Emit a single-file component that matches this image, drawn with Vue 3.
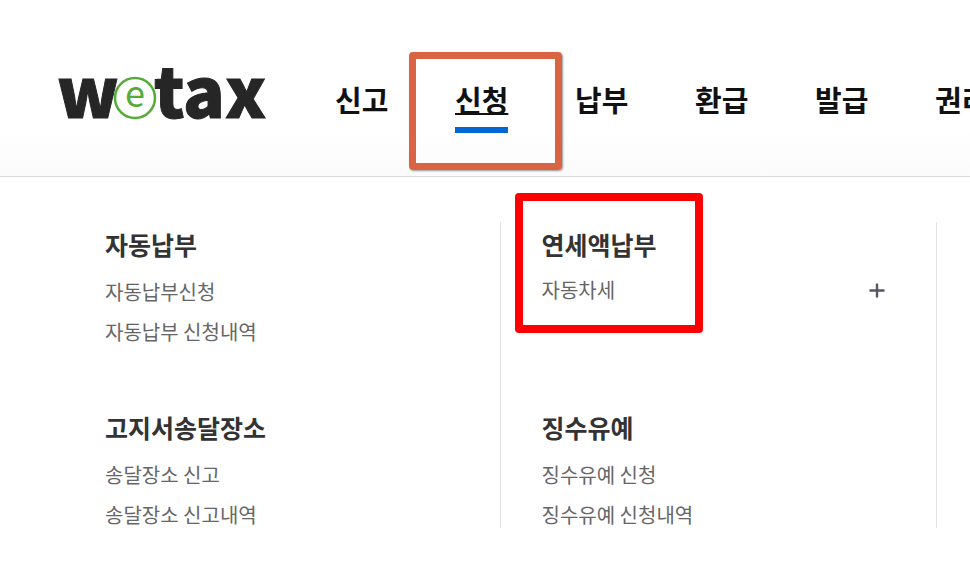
<template>
  <div class="page">
    <header class="header">
      <a href="#" class="logo" aria-label="wetax">
        <svg width="210" height="60" viewBox="0 0 210 60">
          <text class="logo-bold" x="0" y="53">w</text>
          <circle cx="78" cy="33" r="20" fill="#fff" stroke="#55ab3a" stroke-width="2.5" />
          <text class="logo-e" x="78" y="42" text-anchor="middle">e</text>
          <text class="logo-bold" x="97" y="53">tax</text>
        </svg>
      </a>
      <nav class="nav">
        <div v-for="item in navItems" :key="item" class="nav-item">
          <a href="#" class="nav-link" :class="{ active: item === current }">{{ item }}</a>
          <span v-if="item === current" class="mark mark-nav"></span>
        </div>
      </nav>
    </header>

    <main class="menu">
      <div v-for="(column, index) in columns" :key="index" class="column">
        <section v-for="group in column" :key="group.title" class="group">
          <h2>{{ group.title }}</h2>
          <div v-if="group.expandable" class="expand-row">
            <a href="#">{{ group.links[0] }}</a>
            <button type="button" class="expand" aria-label="+">
              <svg width="16" height="16" viewBox="0 0 16 16">
                <path d="M9 1.5v14M1.5 8.5h15" stroke="#585666" stroke-width="2.4" />
              </svg>
            </button>
          </div>
          <ul v-else>
            <li v-for="link in group.links" :key="link">
              <a href="#">{{ link }}</a>
            </li>
          </ul>
          <span v-if="group.expandable" class="mark mark-group"></span>
        </section>
      </div>
    </main>
  </div>
</template>

<script setup>
import { ref } from 'vue'

const current = ref('신청')
const navItems = ['신고', '신청', '납부', '환급', '발급', '권리']

const columns = [
  [
    { title: '자동납부', links: ['자동납부신청', '자동납부 신청내역'] },
    { title: '고지서송달장소', links: ['송달장소 신고', '송달장소 신고내역'] }
  ],
  [
    { title: '연세액납부', links: ['자동차세'], expandable: true },
    { title: '징수유예', links: ['징수유예 신청', '징수유예 신청내역'] }
  ]
]
</script>

<style>
body {
  margin: 0;
  background: #fff;
}
</style>

<style scoped>
.page {
  overflow: hidden;
  font-family: "Noto Sans CJK KR", "Noto Sans", sans-serif;
  color: #666;
}

a {
  color: inherit;
  text-decoration: none;
}

.header {
  display: flex;
  align-items: center;
  gap: 68px;
  height: 176px;
  padding-left: 57px;
  border-bottom: 1px solid #d9d9d9;
  background: linear-gradient(#fff 70%, #fbfbfb);
}

.logo {
  flex: none;
  height: 60px;
  margin-top: 14px;
}

.logo svg {
  display: block;
  overflow: visible;
}

.logo-bold {
  font-size: 69px;
  font-weight: 900;
  fill: #262626;
  stroke: #262626;
  stroke-width: 1px;
}

.logo-e {
  font-size: 36px;
  font-weight: 400;
  fill: #55ab3a;
}

.nav {
  display: flex;
  margin-top: 34px;
}

.nav-item {
  position: relative;
  flex: none;
  width: 120px;
}

.nav-link {
  display: inline-block;
  padding-bottom: 6px;
  border-bottom: 6px solid transparent;
  font-size: 29px;
  font-weight: 700;
  line-height: 44px;
  color: #111;
}

.nav-link.active {
  border-bottom-color: #0067d5;
  text-decoration: underline;
  text-decoration-thickness: 2px;
}

.mark {
  position: absolute;
  box-sizing: border-box;
  pointer-events: none;
}

.mark-nav {
  top: -25px;
  left: -46px;
  width: 153px;
  height: 118px;
  border: 7px solid #d96444;
  border-radius: 4px;
  box-shadow: 1px 1px 2px rgba(0, 0, 0, 0.4);
}

.mark-group {
  top: -29px;
  left: -27px;
  width: 188px;
  height: 140px;
  border: 8px solid #f00;
  border-radius: 4px;
}

.menu {
  display: grid;
  grid-template-columns: repeat(2, 45vw);
  padding: 45px 0 34px 64px;
}

.column {
  display: flex;
  flex-direction: column;
  gap: 60px;
  padding: 0 52px 0 41px;
  border-right: 1px solid #e3e3e3;
}

.group {
  position: relative;
  min-height: 123px;
}

h2 {
  margin: 0 0 13px;
  font-size: 25px;
  font-weight: 700;
  line-height: 44px;
  color: #333;
}

ul {
  display: flex;
  flex-direction: column;
  gap: 14px;
  margin: 0;
  padding: 0;
  list-style: none;
}

li {
  font-size: 20px;
  line-height: 26px;
}

.expand-row {
  display: flex;
  align-items: center;
  justify-content: space-between;
  font-size: 20px;
  line-height: 22px;
}

.expand {
  display: flex;
  padding: 0;
  border: 0;
  background: none;
  cursor: pointer;
}

.expand svg {
  overflow: visible;
}
</style>
